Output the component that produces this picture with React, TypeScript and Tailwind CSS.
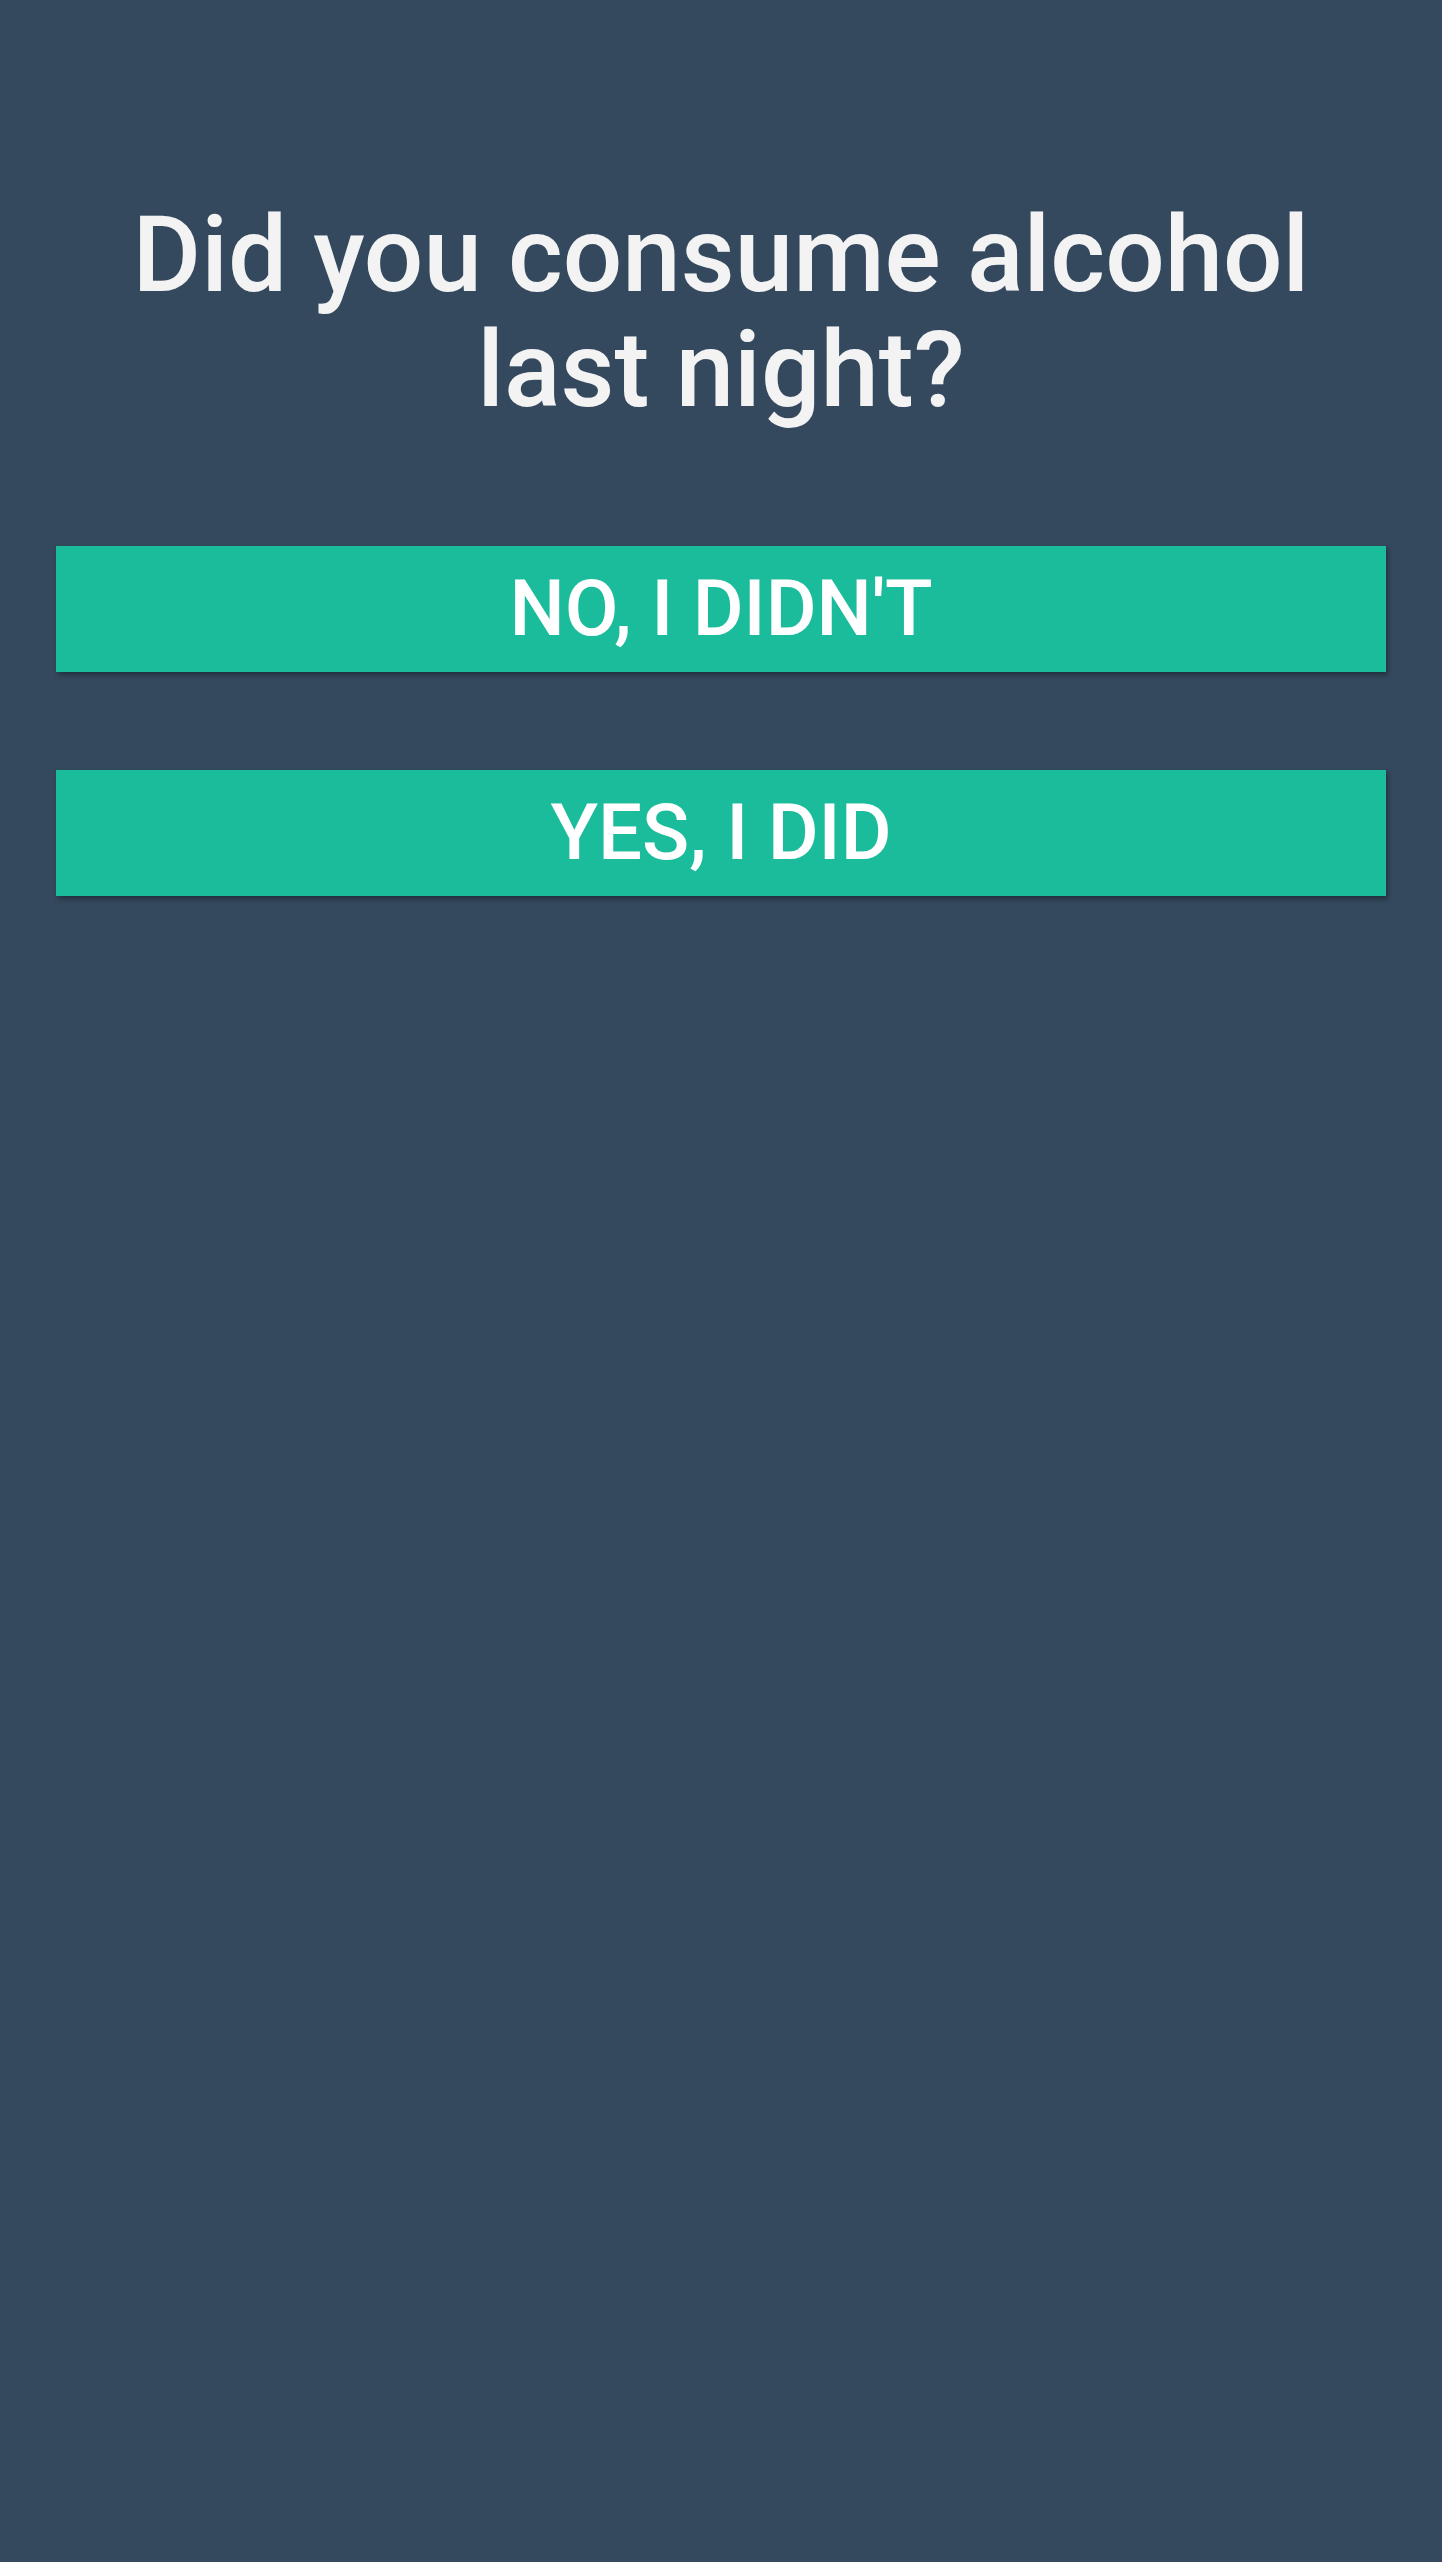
import React from 'react';

const answers = ["NO, I DIDN'T", 'YES, I DID'];

const App: React.FC = () => {
  return (
    <div
      className="min-h-[2562px] w-full bg-[#34495e] px-[56px] pt-[198px]"
      style={{ fontFamily: 'Roboto, "Noto Sans", sans-serif' }}
    >
      {/* Question */}
      <h1 className="mx-auto text-center text-[105px] font-medium leading-[115px] text-[#f3f3f4]">
        Did you consume alcohol
        <br />
        last night?
      </h1>

      {/* Answers */}
      <div className="mt-[118px] flex flex-col gap-[98px]">
        {answers.map((label) => (
          <button
            key={label}
            className="flex h-[126px] w-full items-center justify-center bg-[#1abc9c] text-[78px] font-medium leading-none text-white shadow-[2px_3px_5px_rgba(0,0,0,0.35)]"
          >
            {label}
          </button>
        ))}
      </div>
    </div>
  );
};

export default App;
